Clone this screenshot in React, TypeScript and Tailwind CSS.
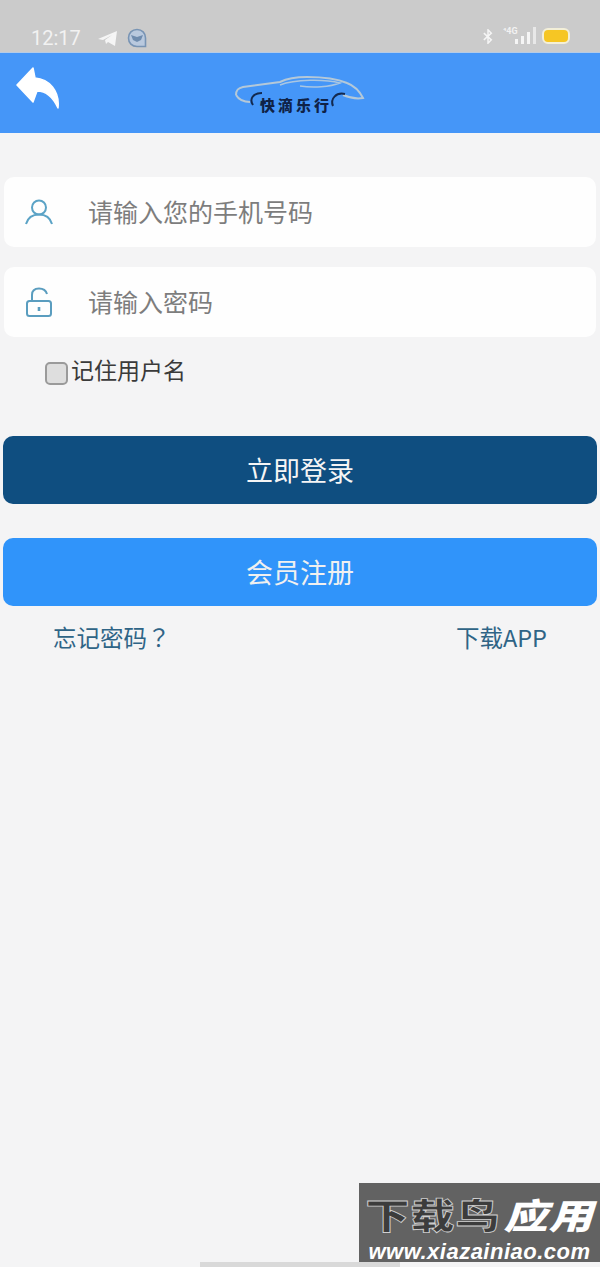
import React from 'react';

const FONT = '"Noto Sans CJK SC", "Noto Sans", sans-serif';

function CarLogo() {
  return (
    <div className="relative w-[130px] h-[44px] mt-[2px]">
      <svg width="130" height="44" viewBox="0 0 130 44" fill="none" className="absolute inset-0">
        <path d="M1 23 C1 18 3 16 8 15 L45 10 C55 5 65 5 72 5 C90 5 105 8 112 11 C120 14 125 20 128 26 C122 27 115 26 108 23 M1 23 C4 28 10 30 15 30" stroke="#b4c8d8" strokeWidth="2" />
        <path d="M45 13 C60 7 90 7 105 11 C95 15 78 16 65 14" stroke="#a9c6e2" strokeWidth="1.6" />
        <path d="M18 33 C14 27 18 21 27 21" stroke="#13294f" strokeWidth="2" />
        <path d="M98 34 C95 27 101 20 110 22" stroke="#13294f" strokeWidth="2" />
      </svg>
      <span className="absolute left-[25px] top-[23px] text-[15px] leading-[20px] font-black tracking-[3px] text-[#0f2247] whitespace-nowrap">快滴乐行</span>
    </div>
  );
}

function StatusBar() {
  return (
    <div className="h-[53px] bg-[#cbcbcb] flex items-end justify-between pb-[1px] pl-[31px] pr-[30px] border-b border-[#b5cbe6]">
      <div className="flex items-center">
        <span className="text-[20px] leading-[26px] text-[#f2f2f2] w-[68px]" style={{ fontFamily: '"Roboto", sans-serif' }}>12:17</span>
        <svg width="20" height="17" viewBox="0 0 20 17" className="ml-[-1px]">
          <path d="M0 9 L19 1 L17 16 L10 12 L8 14 L7 10 L14 5 L5 10 Z" fill="#f5f5f5" />
        </svg>
        <svg width="20" height="20" viewBox="0 0 20 20" fill="none" className="ml-[9px]">
          <path d="M10 1.5 C15 1.5 18.5 5 18.5 10 L18.5 18.5 L10 18.5 C5 18.5 1.5 15 1.5 10 C1.5 5 5 1.5 10 1.5 Z" fill="#b9c9de" stroke="#7894b4" strokeWidth="1.6" />
          <path d="M4 7 L10 9 L16 7 L14 12 L10 14 L6 12 Z" fill="#6f8cae" />
        </svg>
      </div>
      <div className="flex items-center mb-[5px]">
        <svg width="10" height="15" viewBox="0 0 12 18" fill="none" stroke="#f5f5f5" strokeWidth="1.8" className="mr-[3px]">
          <path d="M1 5 L10 13 L6 17 L6 1 L10 5 L1 13" />
        </svg>
        <svg width="34" height="20" viewBox="0 0 34 20" className="ml-[7px]">
          <text x="0" y="8" fontSize="9" fontWeight="700" fill="#f2f2f2" fontFamily="Roboto, sans-serif">⁴4G</text>
          <rect x="12" y="13" width="3" height="5" fill="#f5f5f5" />
          <rect x="18" y="10" width="3" height="8" fill="#f5f5f5" />
          <rect x="24" y="6" width="3" height="12" fill="#f5f5f5" />
          <rect x="30" y="1" width="3" height="17" fill="#e8e8e8" />
        </svg>
        <div className="ml-[5px] w-[28px] h-[16px] rounded-[6px] border-2 border-[#f3efd8] bg-[#f6c624]" />
      </div>
    </div>
  );
}

function Header() {
  return (
    <div className="relative h-[80px] bg-[#4596f8] flex justify-center pt-[17px]">
      <svg width="46" height="44" viewBox="0 0 46 44" className="absolute left-[15px] top-[14px]">
        <path d="M2 18 L18 1 L20 11 C34 12 45 24 43 41 C38 30 32 24 22 24 L18 35 Z" fill="#ffffff" stroke="#ffffff" strokeLinejoin="round" strokeWidth="1.5" />
      </svg>
      <CarLogo />
    </div>
  );
}

function Field({ icon, placeholder, className }: { icon: React.ReactNode; placeholder: string; className: string }) {
  return (
    <div className={`h-[70px] mx-[4px] bg-[#fefefe] rounded-[10px] flex items-center ${className}`}>
      <div className="w-[85px] flex justify-center pr-[16px] pl-[1px]">{icon}</div>
      <span className="text-[25px] leading-[32px] mt-[-2px] ml-[-1px] text-[#7d7d7d]">{placeholder}</span>
    </div>
  );
}

export default function App() {
  return (
    <div className="relative w-[600px] h-[1267px] overflow-hidden bg-[#f4f4f5]" style={{ fontFamily: FONT }}>
      <StatusBar />
      <Header />

      <Field
        className="mt-[44px]"
        placeholder="请输入您的手机号码"
        icon={
          <svg width="28" height="26" viewBox="0 0 28 26" fill="none" stroke="#5ba3c6" strokeWidth="2">
            <circle cx="14" cy="8.5" r="7" />
            <path d="M1 25 C3 18 8 15.5 14 15.5 C20 15.5 25 18 27 25" />
          </svg>
        }
      />
      <Field
        className="mt-[20px]"
        placeholder="请输入密码"
        icon={
          <svg width="28" height="30" viewBox="0 0 28 30" fill="none" stroke="#5a9dbf" strokeWidth="2">
            <rect x="2" y="14" width="24" height="15" rx="2.5" />
            <path d="M7 14 L7 8 C7 3.5 10 1.5 14 1.5 C18 1.5 21 3.5 22 7" />
            <path d="M14 20 L14 24" strokeWidth="2.6" />
          </svg>
        }
      />

      <div className="flex items-center mt-[24px] pl-[45px] h-[24px]">
        <div className="w-[23px] h-[23px] rounded-[5px] border-2 border-[#9a9a9a] bg-[#dedede]" />
        <span className="ml-[3px] mt-[-8px] text-[23px] leading-[30px] text-[#3a3a3a]">记住用户名</span>
      </div>

      <div className="mx-[3px] mt-[51px] h-[68px] rounded-[10px] bg-[#0f4e80] flex items-center justify-center text-[27px] text-[#f5f5f5]">立即登录</div>
      <div className="mx-[3px] mt-[34px] h-[68px] rounded-[10px] bg-[#3094fa] flex items-center justify-center text-[27px] text-[#f0f0f0]">会员注册</div>

      <div className="flex justify-between pl-[53px] pr-[53px] mt-[15px] text-[23.5px] leading-[32px] text-[#2f6486]">
        <span>
          忘记密码<span style={{ fontFamily: '"Noto Sans CJK TC", sans-serif' }}>？</span>
        </span>
        <span>下载APP</span>
      </div>

      {/* watermark */}
      <div className="absolute right-0 top-[1183px] w-[241px] h-[79px] bg-[#626262] flex flex-col items-center">
        <div className="flex shrink-0 items-center h-[56px] pt-[6px] text-[44px] leading-[40px] font-black tracking-[1px] whitespace-nowrap scale-y-[0.8]">
          <span className="text-[#3c3c3c] [-webkit-text-stroke:1px_#d0d0d0]">下载鸟</span>
          <span className="text-white italic ml-[3px]">应用</span>
        </div>
        <span className="shrink-0 text-[22px] leading-[25px] font-bold italic tracking-[0.5px] text-white whitespace-nowrap" style={{ fontFamily: '"Liberation Sans", sans-serif' }}>www.xiazainiao.com</span>
      </div>

      {/* home bar */}
      <div className="absolute left-[200px] bottom-0 w-[200px] h-[5px] bg-[#d9d9d9]" />
    </div>
  );
}
